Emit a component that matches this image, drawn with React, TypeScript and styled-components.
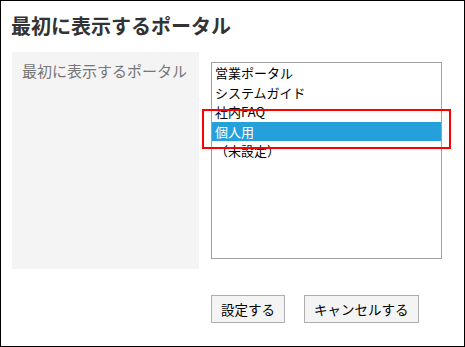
import styled, { createGlobalStyle } from "styled-components";

const PORTALS = ["営業ポータル", "システムガイド", "社内FAQ", "個人用", "（未設定）"];
const SELECTED = "個人用";

export default function App() {
  return (
    <>
      <GlobalStyle />
      <Dialog>
        <Title>最初に表示するポータル</Title>
        <FormRow>
          <LabelCell>最初に表示するポータル</LabelCell>
          <FieldCell>
            <ListBox role="listbox">
              {PORTALS.map((name) => (
                <Option key={name} $selected={name === SELECTED}>
                  {name}
                </Option>
              ))}
              <Highlight />
            </ListBox>
          </FieldCell>
        </FormRow>
        <Actions>
          <Button>設定する</Button>
          <Button>キャンセルする</Button>
        </Actions>
      </Dialog>
    </>
  );
}

const GlobalStyle = createGlobalStyle`
  html, body {
    margin: 0;
    padding: 0;
    background: #fff;
  }
  body {
    font-family: "Noto Sans CJK JP", "Noto Sans", sans-serif;
  }
`;

const Dialog = styled.div`
  box-sizing: border-box;
  width: 465px;
  height: 347px;
  border: 1px solid #000;
  padding: 13px 11px 0 11px;
  display: flex;
  flex-direction: column;
`;

const Title = styled.h1`
  margin: 0 0 0 -1px;
  font-size: 20px;
  line-height: 24px;
  font-weight: 700;
  color: #333;
`;

const FormRow = styled.div`
  margin-top: 14px;
  display: grid;
  grid-template-columns: 187px 1fr;
  height: 217px;
`;

const LabelCell = styled.div`
  background: #f4f4f4;
  color: #777;
  font-size: 15px;
  line-height: 20px;
  padding: 9px 0 0 10px;
  white-space: nowrap;
`;

const FieldCell = styled.div`
  padding: 10px 0 0 12px;
`;

const ListBox = styled.div`
  position: relative;
  box-sizing: border-box;
  width: 231px;
  height: 197px;
  border: 1px solid #a0a0a0;
  padding: 0;
`;

const Option = styled.div<{ $selected: boolean }>`
  height: 19.5px;
  line-height: 19.5px;
  font-size: 13px;
  padding-left: 3px;
  white-space: nowrap;
  color: ${(p) => (p.$selected ? "#fff" : "#000")};
  background: ${(p) => (p.$selected ? "#26a0da" : "transparent")};
`;

const Highlight = styled.div`
  position: absolute;
  left: -10px;
  top: 46px;
  width: 249px;
  height: 40px;
  box-sizing: border-box;
  border: 2px solid #f00;
  pointer-events: none;
`;

const Actions = styled.div`
  display: flex;
  gap: 19px;
  padding: 26px 0 0 199px;
`;

const Button = styled.button`
  box-sizing: border-box;
  height: 28px;
  padding: 0 9px;
  font-family: inherit;
  font-size: 13.5px;
  line-height: 26px;
  color: #000;
  background: #f4f4f4;
  border: 1px solid #adadad;
  border-radius: 0;
  white-space: nowrap;
`;
